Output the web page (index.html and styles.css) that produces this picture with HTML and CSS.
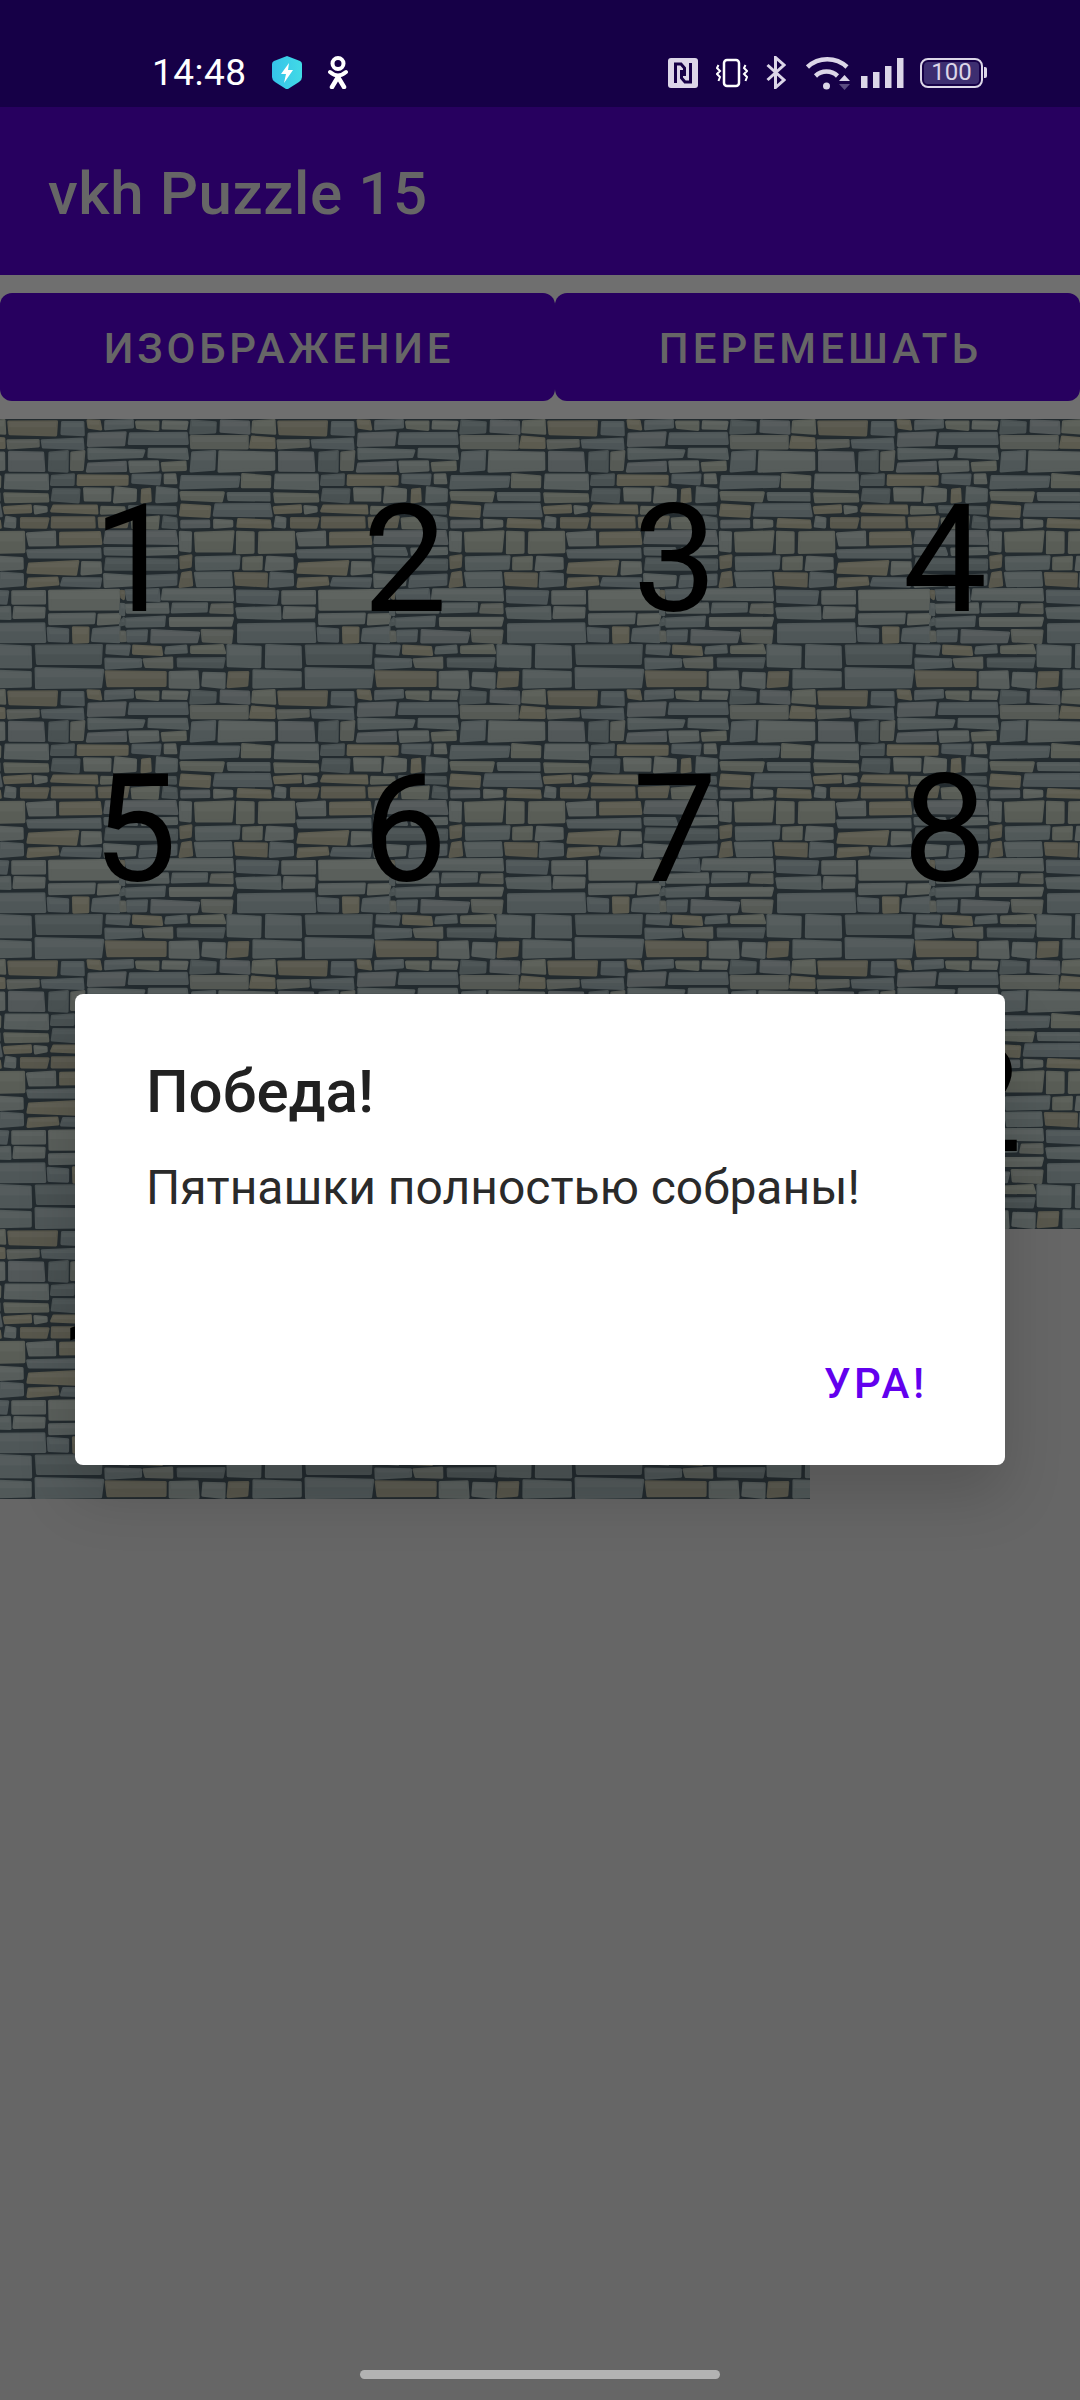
FILE: index.html
```html
<!DOCTYPE html>
<html>
<head>
  <meta charset="utf-8">
  <title>vkh Puzzle 15</title>
  <link rel="stylesheet" href="styles.css">
</head>
<body>

<div class="screen">

  <!-- Status bar -->
  <div class="status-bar">
    <div class="status-left">
      <span class="clock">14:48</span>
      <svg class="ic-shield" width="30" height="33" viewBox="0 0 30 33">
        <defs>
          <linearGradient id="shieldFill" x1="0" y1="0" x2="1" y2="0">
            <stop offset="0" stop-color="#35c2ea"/>
            <stop offset="1" stop-color="#42dbe6"/>
          </linearGradient>
        </defs>
        <path d="M15 0 L28 5 Q30 6 30 8 V21 Q30 24 27 26 L16 33 Q15 33.500 14 33 L3 26 Q0 24 0 21 V8 Q0 6 2 5 Z" fill="url(#shieldFill)"/>
        <path d="M17 7 L9 18 H14 L12 27 L21 14 H16 Z" fill="#fff"/>
      </svg>
      <svg class="ic-ok" width="20" height="33" viewBox="0 0 20 33">
        <circle cx="10" cy="7.500" r="5.500" fill="none" stroke="#fff" stroke-width="4"/>
        <path d="M2 16 Q10 23 18 16" fill="none" stroke="#fff" stroke-width="4" stroke-linecap="round"/>
        <path d="M10 21 L4 31 M10 21 L16 31" fill="none" stroke="#fff" stroke-width="4.500" stroke-linecap="round"/>
      </svg>
    </div>
    <div class="status-right">
      <svg class="ic-nfc" width="30" height="30" viewBox="0 0 30 30">
        <rect width="30" height="30" rx="3" fill="#dcd6e8"/>
        <path d="M7.500 25 V6 H13 L16.500 10 V18 M22.500 5 V24 H17 L13.500 20 V12" fill="none" stroke="#160047" stroke-width="3"/>
      </svg>
      <svg class="ic-vibrate" width="32" height="30" viewBox="0 0 32 30">
        <rect x="8" y="2" width="15" height="26" rx="3" fill="none" stroke="#fff" stroke-width="2.500"/>
        <path d="M2.500 7 L1 10 L4 13 L1 16 L4 19 L2.500 23 M29.500 7 L28 10 L31 13 L28 16 L31 19 L29.500 23" fill="none" stroke="#fff" stroke-width="2"/>
      </svg>
      <svg class="ic-bt" width="20" height="33" viewBox="0 0 20 33">
        <path d="M1.500 9 L18 24 L9.500 31.500 V1.500 L18 9 L1.500 24" fill="none" stroke="#dcd6e8" stroke-width="3"/>
      </svg>
      <svg class="ic-wifi" width="44" height="34" viewBox="0 0 44 34">
        <path d="M1.500 11 A29 29 0 0 1 41 11" fill="none" stroke="#dcd6e8" stroke-width="4.500"/>
        <path d="M9.500 20 A16 16 0 0 1 31.500 20" fill="none" stroke="#dcd6e8" stroke-width="4.500"/>
        <circle cx="20.500" cy="30" r="3.500" fill="#dcd6e8"/>
        <path d="M33 25 L38.500 19 L44 25 Z" fill="#dcd6e8"/>
        <path d="M33 28 L38.500 34 L44 28 Z" fill="#5a4b80"/>
      </svg>
      <svg class="ic-signal" width="44" height="30" viewBox="0 0 44 30">
        <rect x="0" y="18" width="6.500" height="12" fill="#dcd6e8"/>
        <rect x="12" y="14" width="6.500" height="16" fill="#dcd6e8"/>
        <rect x="24" y="8" width="6.500" height="22" fill="#dcd6e8"/>
        <rect x="36" y="0" width="6.500" height="30" fill="#dcd6e8"/>
      </svg>
      <div class="battery">
        <div class="battery-body"><span class="battery-level">100</span></div>
        <div class="battery-cap"></div>
      </div>
    </div>
  </div>

  <!-- App bar -->
  <div class="app-bar">vkh Puzzle 15</div>

  <!-- Buttons -->
  <div class="controls">
    <button type="button" class="btn">ИЗОБРАЖЕНИЕ</button>
    <button type="button" class="btn">ПЕРЕМЕШАТЬ</button>
  </div>

  <!-- Puzzle board, the empty cell is the bottom right one -->
  <div class="board">
    <div class="tile"><svg class="wall"><use href="#stones"/></svg><span>1</span></div>
    <div class="tile"><svg class="wall"><use href="#stones"/></svg><span>2</span></div>
    <div class="tile"><svg class="wall"><use href="#stones"/></svg><span>3</span></div>
    <div class="tile"><svg class="wall"><use href="#stones"/></svg><span>4</span></div>
    <div class="tile"><svg class="wall"><use href="#stones"/></svg><span>5</span></div>
    <div class="tile"><svg class="wall"><use href="#stones"/></svg><span>6</span></div>
    <div class="tile"><svg class="wall"><use href="#stones"/></svg><span>7</span></div>
    <div class="tile"><svg class="wall"><use href="#stones"/></svg><span>8</span></div>
    <div class="tile"><svg class="wall"><use href="#stones"/></svg><span>9</span></div>
    <div class="tile tile-wide"><svg class="wall"><use href="#stones"/></svg><span>10</span></div>
    <div class="tile tile-wide"><svg class="wall"><use href="#stones"/></svg><span>11</span></div>
    <div class="tile tile-wide"><svg class="wall"><use href="#stones"/></svg><span>12</span></div>
    <div class="tile tile-wide"><svg class="wall"><use href="#stones"/></svg><span>13</span></div>
    <div class="tile tile-wide"><svg class="wall"><use href="#stones"/></svg><span>14</span></div>
    <div class="tile tile-wide"><svg class="wall"><use href="#stones"/></svg><span>15</span></div>
  </div>

  <div class="gesture-area"><div class="gesture-bar"></div></div>

  <!-- Win dialog -->
  <div class="dialog">
    <h2 class="dialog-title">Победа!</h2>
    <p class="dialog-text">Пятнашки полностью собраны!</p>
    <div class="dialog-actions">
      <button type="button" class="dialog-btn">УРА!</button>
    </div>
  </div>

</div>

<!-- Stone picture shared by all tiles, filled by script.js -->
<svg class="defs" width="0" height="0">
  <defs><g id="stones"></g></defs>
</svg>

<script src="script.js"></script>
</body>
</html>
```

FILE: styles.css
```css
* {
  box-sizing: border-box;
}

body {
  margin: 0;
  background-color: #666666;
  font-family: Roboto, "Liberation Sans", sans-serif;
}

.screen {
  position: relative;
  width: 1080px;
  height: 2400px;
  display: flex;
  flex-direction: column;
  overflow: hidden;
}

/* status bar */
.status-bar {
  height: 107px;
  flex-shrink: 0;
  background-color: #160047;
  display: flex;
  align-items: center;
  justify-content: space-between;
  padding: 38px 93px 0 152px;
}

.status-left,
.status-right {
  display: flex;
  align-items: center;
}

.clock {
  color: #ffffff;
  font-size: 37px;
  letter-spacing: 0.5px;
  width: 120px;
}

.ic-ok {
  margin-left: 26px;
}

.ic-vibrate {
  margin-left: 18px;
}

.ic-bt {
  margin-left: 18px;
}

.ic-wifi {
  margin-left: 20px;
}

.ic-signal {
  margin-left: 11px;
}

.battery {
  margin-left: 15px;
  display: flex;
  align-items: center;
}

.battery-body {
  width: 63px;
  height: 30px;
  padding: 2px;
  border: 2.5px solid #dcd6e8;
  border-radius: 8px;
  display: flex;
}

.battery-level {
  flex: 1;
  background-color: #3d2e70;
  border-radius: 4px;
  color: #dcd6e8;
  font-size: 24px;
  line-height: 21px;
  text-align: center;
}

.battery-cap {
  width: 3px;
  height: 11px;
  margin-left: 1px;
  background-color: #dcd6e8;
  border-radius: 0 2px 2px 0;
}

/* app bar */
.app-bar {
  height: 168px;
  flex-shrink: 0;
  background-color: #27005f;
  color: #666666;
  font-size: 60px;
  font-weight: 500;
  letter-spacing: 0.6px;
  line-height: 168px;
  padding: 3px 0 0 48px;
}

/* buttons */
.controls {
  height: 144px;
  flex-shrink: 0;
  display: flex;
  padding: 18px 0;
  background-color: #6f6f6f;
}

.btn {
  height: 108px;
  border: none;
  border-radius: 12px;
  background-color: #27005f;
  color: #666666;
  font-family: inherit;
  font-size: 42px;
  font-weight: 500;
  letter-spacing: 3.75px;
  padding: 2px 0 0 3px;
}

.btn:first-child {
  width: 555px;
}

.btn:last-child {
  width: 525px;
  letter-spacing: 4.1px;
  padding-left: 6px;
}

/* board */
.board {
  display: grid;
  grid-template-columns: repeat(4, 270px);
  grid-auto-rows: 270px;
}

.tile {
  position: relative;
  display: flex;
  align-items: center;
  justify-content: center;
  overflow: hidden;
  background-color: #232b2f;
  color: #000000;
  font-size: 150px;
  line-height: 1;
  padding-top: 12px;
}

.wall {
  position: absolute;
  left: 0;
  top: 0;
  width: 270px;
  height: 270px;
}

.tile span {
  position: relative;
}

/* two digits sit closer together than the font's own spacing */
.tile-wide span {
  letter-spacing: -14px;
  margin-left: -14px;
}

.defs {
  position: absolute;
}

/* home indicator */
.gesture-area {
  margin-top: auto;
  padding-bottom: 21px;
  display: flex;
  justify-content: center;
}

.gesture-bar {
  width: 360px;
  height: 9px;
  border-radius: 5px;
  background-color: #b3b3b3;
}

/* dialog */
.dialog {
  position: absolute;
  left: 75px;
  top: 994px;
  width: 930px;
  height: 471px;
  display: flex;
  flex-direction: column;
  padding: 62px 77px 0 71px;
  background-color: #ffffff;
  border-radius: 8px;
  box-shadow: 0 30px 60px rgba(0, 0, 0, 0.16);
}

.dialog-title {
  margin: 0;
  color: #212121;
  font-size: 60px;
  font-weight: 500;
  line-height: 72px;
}

.dialog-text {
  margin: 28px 0 0;
  color: #2a2a2a;
  font-size: 48px;
  line-height: 64px;
}

.dialog-actions {
  margin-top: auto;
  display: flex;
  justify-content: flex-end;
  padding-bottom: 52px;
}

.dialog-btn {
  border: none;
  background: none;
  padding: 0;
  color: #6200ee;
  font-family: inherit;
  font-size: 42px;
  font-weight: 500;
  letter-spacing: 3.75px;
  line-height: 58px;
}
```

FILE: script.js
```js
// draws the stone wall picture, same one on every tile
var seed = 90210;

function rnd(a, b) {
  seed = (seed * 16807) % 2147483647;
  return a + (seed / 2147483647) * (b - a);
}

var colors = ["#555c5b", "#4d5557", "#5a5f5b", "#515959", "#58574c", "#565a55", "#495152", "#595d56", "#5c5b4f", "#525859", "#4f5758", "#575d5b"];
var svgNS = "http://www.w3.org/2000/svg";
var wall = document.getElementById("stones");

function addPoly(points, dx, fill, opacity) {
  var p = document.createElementNS(svgNS, "polygon");
  p.setAttribute("points", points.map(function(pt) { return (pt[0] + dx) + "," + pt[1]; }).join(" "));
  p.setAttribute("fill", fill);
  if (opacity) {
    p.setAttribute("opacity", opacity);
  } else {
    p.setAttribute("stroke", fill);
    p.setAttribute("stroke-width", 3);
    p.setAttribute("stroke-linejoin", "round");
  }
  wall.appendChild(p);
}

function addStone(x, y, w, h) {
  var j = 1.3;
  var left = x + 2.7, right = x + w - 2.7, top = y + 2.7, bottom = y + h - 2.7;
  var mid = top + (bottom - top) * 0.45;
  var body = [
    [left + rnd(-j, j), top + rnd(-j, j)],
    [right + rnd(-j, j), top + rnd(-j, j)],
    [right + rnd(-j, j), bottom + rnd(-j, j)],
    [left + rnd(-j, j), bottom + rnd(-j, j)]
  ];
  var light = [body[0], body[1], [right, mid], [left, mid]];
  var color = colors[Math.floor(rnd(0, colors.length))];
  // stones past the right edge come back in on the left, so tiles join up
  var shifts = x + w > 270 ? [0, -270] : [0];
  shifts.forEach(function(dx) {
    addPoly(body, dx, color);
    addPoly(light, dx, "#ffffff", 0.035);
  });
}

// cut a block into courses, then courses into stones
function split(x, y, w, h) {
  if (h > 25) {
    var b = Math.round(h * rnd(0.4, 0.6));
    split(x, y, w, b);
    split(x, y + b, w, h - b);
  } else if (w > rnd(38, 92)) {
    var c = w * rnd(0.3, 0.7);
    split(x, y, c, h);
    split(x + c, y, w - c, h);
  } else {
    addStone(x, y, w, h);
  }
}

// bands of two or three blocks, each band slid sideways so joints don't line up
var y = 0;
while (y < 270) {
  var bandH = Math.round(rnd(36, 62));
  if (y + bandH > 246) bandH = 270 - y;
  var x = rnd(0, 270);
  var used = 0;
  while (used < 270) {
    var blockW = Math.min(rnd(70, 130), 270 - used);
    split(x + used > 270 ? x + used - 270 : x + used, y, blockW, bandH);
    used += blockW;
  }
  y += bandH;
}
```
